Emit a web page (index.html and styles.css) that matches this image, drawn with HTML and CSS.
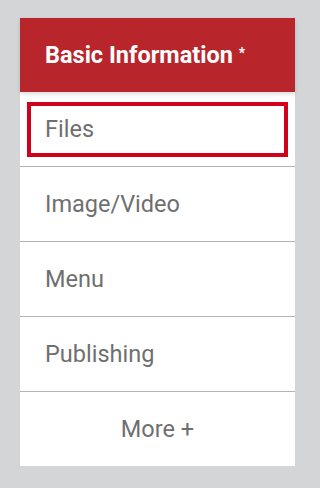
FILE: index.html
```html
<!DOCTYPE html>
<html>
<head>
<meta charset="utf-8">
<link rel="stylesheet" href="styles.css">
</head>
<body>
<nav class="menu">
  <div class="menu-header"><span class="title">Basic Information <span class="req">*</span></span></div>
  <div class="menu-item"><span class="focus-box">Files</span></div>
  <div class="menu-item">Image/Video</div>
  <div class="menu-item">Menu</div>
  <div class="menu-item">Publishing</div>
  <div class="menu-item more">More +</div>
</nav>
</body>
</html>
```
FILE: styles.css
```css
html, body {
  margin: 0;
  padding: 0;
  background: #d4d5d7;
}
body {
  padding: 18px 16px 22px 20px;
  font-family: Roboto, "Liberation Sans", sans-serif;
}
.menu {
  width: 275px;
  background: #ffffff;
  display: flex;
  flex-direction: column;
}
.menu-header {
  height: 74px;
  background: #b8262c;
  color: #ffffff;
  font-weight: 700;
  font-size: 23.5px;
  display: flex;
  align-items: center;
  padding-left: 25px;
  box-shadow: 0 2px 4px rgba(0,0,0,0.15);
  position: relative;
}
.req {
  font-size: 14px;
  vertical-align: 5px;
}
.menu-item {
  height: 74px;
  border-bottom: 1px solid #b4b4ae;
  color: #6f6f6f;
  font-size: 23.5px;
  display: flex;
  align-items: center;
  padding-left: 25px;
}
.menu-item:last-child {
  border-bottom: none;
}
.menu-item:nth-child(2) {
  padding: 7px;
  box-sizing: border-box;
  height: 75px;
}
.focus-box {
  flex: 1;
  height: 55px;
  box-sizing: border-box;
  border: 4px solid #d0021b;
  display: flex;
  align-items: center;
  padding-left: 14px;
}
.more {
  justify-content: center;
  padding-left: 0;
}
```
